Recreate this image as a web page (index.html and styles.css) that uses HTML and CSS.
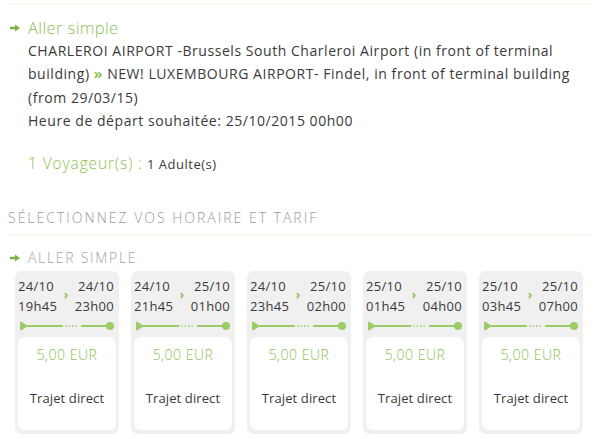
FILE: index.html
```html
<!DOCTYPE html>
<html lang="fr">
<head>
<meta charset="utf-8">
<title>Sélection horaire</title>
<link rel="stylesheet" href="styles.css">
</head>
<body>
<div class="page">
  <div class="rule rule-top"></div>

  <section class="summary">
    <h2 class="leg-title">
      <svg class="arrow" viewBox="0 0 10 8" width="10" height="8"><path d="M0 2.8h5V0.5L10 4 5 7.5V5.2H0z" fill="#7cb342"/></svg>
      Aller simple
    </h2>
    <p class="route">CHARLEROI AIRPORT -Brussels South Charleroi Airport (in front of terminal building) <span class="sep">»</span> NEW! LUXEMBOURG AIRPORT- Findel, in front of terminal building (from 29/03/15)<br>Heure de départ souhaitée: 25/10/2015 00h00</p>
    <p class="travellers"><span class="count">1 Voyageur(s) :</span> <span class="kind">1 Adulte(s)</span></p>
  </section>

  <h3 class="step-title">SÉLECTIONNEZ VOS HORAIRE ET TARIF</h3>
  <div class="rule"></div>

  <div class="leg-label">
    <svg class="arrow" viewBox="0 0 10 8" width="10" height="8"><path d="M0 2.8h5V0.5L10 4 5 7.5V5.2H0z" fill="#7cb342"/></svg>
    ALLER SIMPLE
  </div>

  <div class="cards">
    <div class="card">
      <div class="times">
        <div class="dep"><span>24/10</span><span>19h45</span></div>
        <span class="chev">›</span>
        <div class="arr"><span>24/10</span><span>23h00</span></div>
      </div>
      <svg class="line" viewBox="0 0 96 12" width="96" height="12"><path d="M1 2.5 Q1 1 2.5 1.8 L9 6 L2.5 10.2 Q1 11 1 9.5z" fill="#9ccc65"/><path d="M8 6H44M62 6H90" stroke="#9ccc65" stroke-width="2"/><path d="M46 6H60" stroke="#9ccc65" stroke-width="1.5" stroke-dasharray="1.5 2"/><circle cx="91" cy="6" r="4" fill="#9ccc65"/></svg>
      <div class="fare"><div class="price">5,00 EUR</div><div class="kind">Trajet direct</div></div>
    </div>
    <div class="card">
      <div class="times">
        <div class="dep"><span>24/10</span><span>21h45</span></div>
        <span class="chev">›</span>
        <div class="arr"><span>25/10</span><span>01h00</span></div>
      </div>
      <svg class="line" viewBox="0 0 96 12" width="96" height="12"><path d="M1 2.5 Q1 1 2.5 1.8 L9 6 L2.5 10.2 Q1 11 1 9.5z" fill="#9ccc65"/><path d="M8 6H44M62 6H90" stroke="#9ccc65" stroke-width="2"/><path d="M46 6H60" stroke="#9ccc65" stroke-width="1.5" stroke-dasharray="1.5 2"/><circle cx="91" cy="6" r="4" fill="#9ccc65"/></svg>
      <div class="fare"><div class="price">5,00 EUR</div><div class="kind">Trajet direct</div></div>
    </div>
    <div class="card">
      <div class="times">
        <div class="dep"><span>24/10</span><span>23h45</span></div>
        <span class="chev">›</span>
        <div class="arr"><span>25/10</span><span>02h00</span></div>
      </div>
      <svg class="line" viewBox="0 0 96 12" width="96" height="12"><path d="M1 2.5 Q1 1 2.5 1.8 L9 6 L2.5 10.2 Q1 11 1 9.5z" fill="#9ccc65"/><path d="M8 6H44M62 6H90" stroke="#9ccc65" stroke-width="2"/><path d="M46 6H60" stroke="#9ccc65" stroke-width="1.5" stroke-dasharray="1.5 2"/><circle cx="91" cy="6" r="4" fill="#9ccc65"/></svg>
      <div class="fare"><div class="price">5,00 EUR</div><div class="kind">Trajet direct</div></div>
    </div>
    <div class="card">
      <div class="times">
        <div class="dep"><span>25/10</span><span>01h45</span></div>
        <span class="chev">›</span>
        <div class="arr"><span>25/10</span><span>04h00</span></div>
      </div>
      <svg class="line" viewBox="0 0 96 12" width="96" height="12"><path d="M1 2.5 Q1 1 2.5 1.8 L9 6 L2.5 10.2 Q1 11 1 9.5z" fill="#9ccc65"/><path d="M8 6H44M62 6H90" stroke="#9ccc65" stroke-width="2"/><path d="M46 6H60" stroke="#9ccc65" stroke-width="1.5" stroke-dasharray="1.5 2"/><circle cx="91" cy="6" r="4" fill="#9ccc65"/></svg>
      <div class="fare"><div class="price">5,00 EUR</div><div class="kind">Trajet direct</div></div>
    </div>
    <div class="card">
      <div class="times">
        <div class="dep"><span>25/10</span><span>03h45</span></div>
        <span class="chev">›</span>
        <div class="arr"><span>25/10</span><span>07h00</span></div>
      </div>
      <svg class="line" viewBox="0 0 96 12" width="96" height="12"><path d="M1 2.5 Q1 1 2.5 1.8 L9 6 L2.5 10.2 Q1 11 1 9.5z" fill="#9ccc65"/><path d="M8 6H44M62 6H90" stroke="#9ccc65" stroke-width="2"/><path d="M46 6H60" stroke="#9ccc65" stroke-width="1.5" stroke-dasharray="1.5 2"/><circle cx="91" cy="6" r="4" fill="#9ccc65"/></svg>
      <div class="fare"><div class="price">5,00 EUR</div><div class="kind">Trajet direct</div></div>
    </div>
  </div>
</div>
</body>
</html>
```
FILE: styles.css
```css
html, body {
  margin: 0;
  padding: 0;
  background: #fff;
}

body {
  font-family: "Open Sans", "Lato", sans-serif;
  color: #3a3a3a;
  overflow: hidden;
}

.page {
  width: 584px;
  padding: 3px 8px 0;
}

.rule {
  height: 2px;
  background: #f6f7ee;
}

.summary {
  padding: 12px 0 0 20px;
}

.leg-title {
  position: relative;
  margin: 0;
  font-size: 16.5px;
  font-weight: 300;
  letter-spacing: 0.4px;
  line-height: 22px;
  color: #8cc152;
}

.arrow {
  position: absolute;
  left: -18px;
  top: 7px;
}

.route {
  margin: 0;
  font-size: 14px;
  letter-spacing: 0.55px;
  line-height: 23.3px;
  padding-right: 6px;
}

.route .sep {
  color: #8cc152;
  font-weight: 700;
}

.travellers {
  margin: 19px 0 0;
  line-height: 24px;
}

.travellers .count {
  font-size: 15.5px;
  font-weight: 300;
  letter-spacing: 0.9px;
  color: #8cc152;
}

.travellers .kind {
  font-size: 13px;
  letter-spacing: 0.5px;
}

.step-title {
  margin: 32px 0 6px;
  font-size: 14px;
  font-weight: 300;
  letter-spacing: 2px;
  line-height: 20px;
  color: #9a9a9a;
}

.leg-label {
  position: relative;
  margin: 13px 0 0 20px;
  font-size: 14px;
  font-weight: 300;
  letter-spacing: 1.7px;
  line-height: 18px;
  color: #a2a2a2;
}

.leg-label .arrow {
  top: 5px;
}

.cards {
  display: flex;
  gap: 12px;
  margin: 4px 0 0 7px;
}

.card {
  width: 104px;
  height: 163px;
  box-sizing: border-box;
  background: #f0f0f0;
  border-radius: 7px;
  padding: 5px 3px 4px;
  display: flex;
  flex-direction: column;
}

.times {
  display: flex;
  align-items: center;
  justify-content: space-between;
  padding: 0 2px 0 0;
  font-size: 13px;
  letter-spacing: 0.3px;
  line-height: 20px;
  color: #3a3a3a;
}

.times .dep,
.times .arr {
  display: flex;
  flex-direction: column;
}

.times .arr {
  align-items: flex-end;
}

.chev {
  color: #8cc152;
  font-size: 12px;
  font-weight: 700;
  margin-top: -3px;
}

.line {
  display: block;
  margin: 4px 0 5px 1px;
}

.fare {
  flex: 1;
  background: #fff;
  border-radius: 7px;
  text-align: center;
}

.price {
  margin-top: 8px;
  font-size: 14px;
  font-weight: 300;
  letter-spacing: 0.5px;
  color: #8cc152;
  line-height: 20px;
}

.fare .kind {
  margin-top: 23px;
  font-size: 13px;
  letter-spacing: 0.1px;
  line-height: 20px;
}
```
